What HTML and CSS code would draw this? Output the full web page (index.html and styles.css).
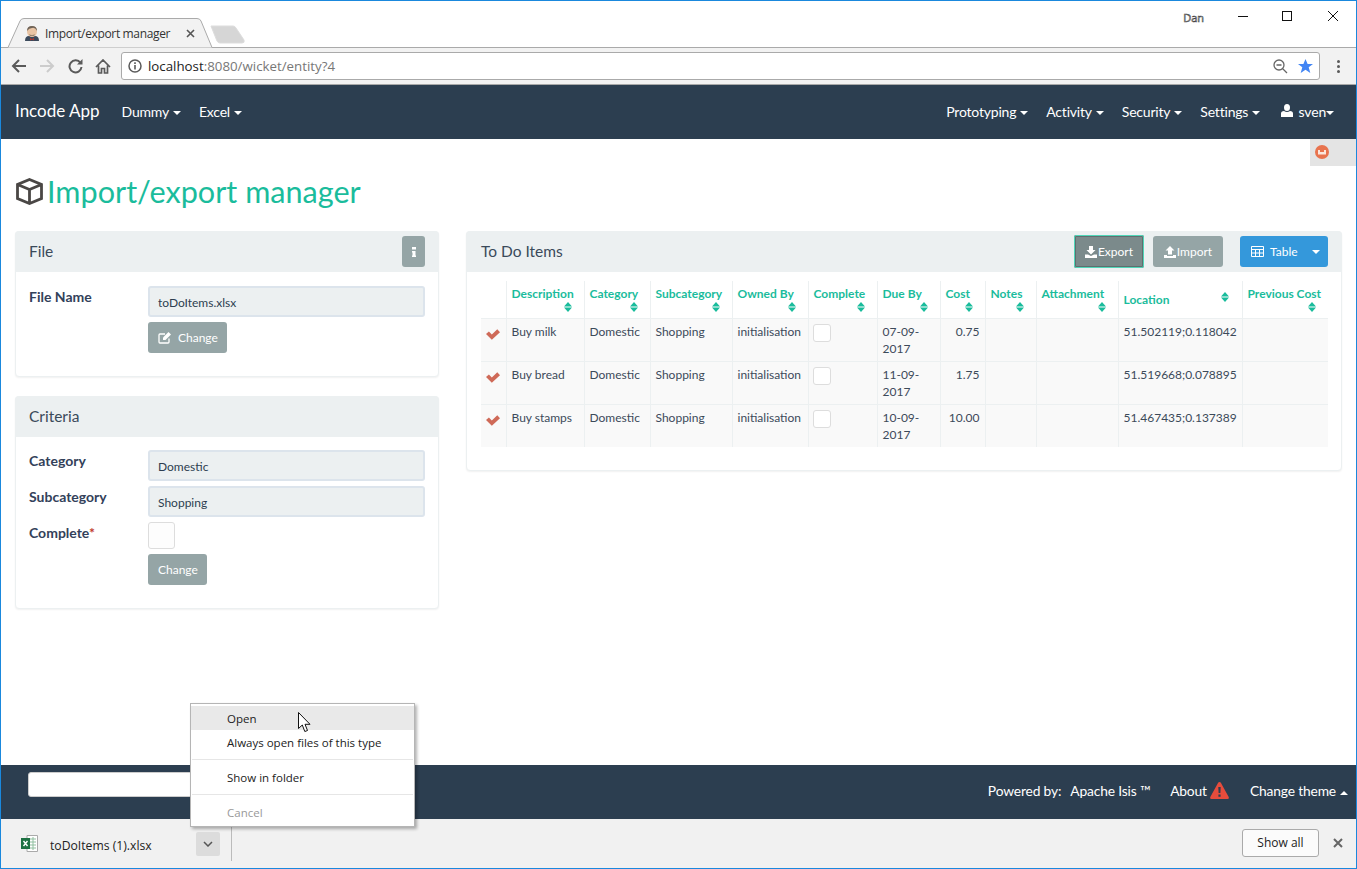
FILE: index.html
```html
<!DOCTYPE html>
<html>

<head>
  <meta charset="utf-8">
  <title>Import/export manager</title>
  <link rel="stylesheet" href="styles.css">
</head>

<body>
  <svg class="sprite">
    <symbol id="sort" viewBox="0 0 8 10"><path d="M4 0 8 4.500H0ZM0 5.500H8L4 10Z" /></symbol>
    <symbol id="check" viewBox="0 0 14.4 11"><path d="M0 5 3 2.300 6 5.600 11.600 0 14.400 3.300 6 11Z" /></symbol>
  </svg>

  <div class="window">
    <!-- browser chrome -->
    <header class="tabstrip">
      <div class="tab">
        <svg class="tab-shape" width="206" height="30" viewBox="0 0 206 30">
          <path d="M0 29.500H1L13 3Q14 .5 17 .5H190Q193 .5 194 3L205 29.500H206" fill="#f2f2f2" stroke="#aaa" />
        </svg>
        <svg class="favicon" width="16" height="16" viewBox="0 0 16 16">
          <path d="M1 16Q1 11 5 11H11Q15 11 15 16Z" fill="#3c4a5c" />
          <ellipse cx="8" cy="6.500" rx="5" ry="5.500" fill="#e9c4a4" />
          <path d="M3 6Q3 1 8 1 13 1 13 6 11 2 8 3 5 3 3 6Z" fill="#6d6256" />
          <path d="M5 9Q8 11 11 9L10 11H6Z" fill="#9a8570" />
          <path d="M6 13 8 14 10 13V15.500L8 14.500 6 15.500Z" fill="#b5352c" />
        </svg>
        <span class="tab-title">Import/export manager</span>
        <svg class="tab-close" width="9" height="9" viewBox="0 0 9 9"><path d="M1 1 8 8M8 1 1 8" stroke="#555" stroke-width="1.600" /></svg>
      </div>
      <svg class="newtab" width="36" height="19" viewBox="0 0 36 19"><path d="M1 1H23Q25 1 26 3L34 15Q35 18 32 18H10Q8 18 7 16Z" fill="#d6d6d6" stroke="#ddd" /></svg>
      <div class="winctl">
        <span class="winuser">Dan</span>
        <svg width="10" height="1" viewBox="0 0 10 1"><path d="M0 .5H10" stroke="#111" /></svg>
        <svg width="10" height="10" viewBox="0 0 10 10"><rect x=".5" y=".5" width="9" height="9" fill="none" stroke="#111" /></svg>
        <svg width="10" height="10" viewBox="0 0 10 10"><path d="M0 0 10 10M10 0 0 10" stroke="#111" /></svg>
      </div>
    </header>

    <div class="toolbar">
      <span class="tool"><svg width="16" height="14" viewBox="0 0 16 14"><path d="M15 7H2M8 1 2 7 8 13" fill="none" stroke="#5a5a5a" stroke-width="2" /></svg></span>
      <span class="tool"><svg width="16" height="14" viewBox="0 0 16 14"><path d="M1 7H14M8 1 14 7 8 13" fill="none" stroke="#ccc" stroke-width="2" /></svg></span>
      <span class="tool"><svg width="15" height="15" viewBox="0 0 15 15"><path d="M12.500 4A6 6 0 1 0 13.500 8" fill="none" stroke="#5a5a5a" stroke-width="2" /><path d="M9 5.500H14.500V0Z" fill="#5a5a5a" /></svg></span>
      <span class="tool"><svg width="16" height="15" viewBox="0 0 16 15"><path d="M1 8 8 1 15 8M3.500 6.500V14H6.500V9.500H9.500V14H12.500V6.500" fill="none" stroke="#5a5a5a" stroke-width="1.700" /></svg></span>
      <div class="omnibox">
        <svg width="14" height="14" viewBox="0 0 14 14"><circle cx="7" cy="7" r="6" fill="none" stroke="#5a5a5a" stroke-width="1.500" /><path d="M7 6V10.500M7 3.300V5" stroke="#5a5a5a" stroke-width="1.600" /></svg>
        <span class="url"><b>localhost</b>:8080/wicket/entity?4</span>
        <svg class="zoomout" width="15" height="15" viewBox="0 0 15 15"><circle cx="6" cy="6" r="5" fill="none" stroke="#666" stroke-width="1.300" /><path d="M3.500 6H8.500M9.500 9.500 14 14" stroke="#666" stroke-width="1.300" /></svg>
        <svg width="15" height="14" viewBox="0 0 15 14"><path d="M7.500 0 9.600 5H15L10.700 8.300 12.300 14 7.500 10.700 2.700 14 4.300 8.300 0 5H5.400Z" fill="#4285f4" /></svg>
      </div>
      <span class="kebab"><i></i><i></i><i></i></span>
    </div>

    <!-- app -->
    <nav class="navbar">
      <a class="brand">Incode App</a>
      <ul class="menu">
        <li>Dummy<span class="caret"></span></li>
        <li>Excel<span class="caret"></span></li>
      </ul>
      <ul class="menu menu-right">
        <li>Prototyping<span class="caret"></span></li>
        <li>Activity<span class="caret"></span></li>
        <li>Security<span class="caret"></span></li>
        <li>Settings<span class="caret"></span></li>
        <li class="user">
          <svg width="12" height="13" viewBox="0 0 12 13"><ellipse cx="6" cy="3.500" rx="3" ry="3.500" /><path d="M0 13V9.500Q0 7 3 7 6 9 9 7 12 7 12 9.500V13Z" /></svg>
          sven<span class="caret caret-tight"></span>
        </li>
      </ul>
    </nav>

    <main class="page">
      <div class="debugbar">
        <svg width="14" height="14" viewBox="0 0 14 14"><circle cx="7" cy="7" r="7" fill="#e8734e" /><path d="M3 5H5V7H9V5H11V9.500H3Z" fill="#fbe6dc" /></svg>
      </div>

      <h1 class="title">
        <svg width="27" height="27" viewBox="0 0 27 27"><path d="M13.500 1.500 25.500 6.500V20.500L13.500 25.500 1.500 20.500V6.500ZM1.500 6.500 13.500 11.500 25.500 6.500M13.500 11.500V25.500" fill="none" stroke="#4a4745" stroke-width="2.800" /></svg>
        Import/export manager
      </h1>

      <div class="columns">
        <div class="col-left">
          <section class="panel">
            <div class="panel-head">
              <span class="panel-title">File</span>
              <span class="btn btn-info">
                <svg width="4" height="10" viewBox="0 0 4 10"><path d="M0 0H4V2.500H0ZM0 4H3.500V8.500H4V10H0V8.500H.5V5.500H0Z" fill="#fff" /></svg>
              </span>
            </div>
            <div class="panel-body">
              <div class="field">
                <label>File Name</label>
                <div class="value">toDoItems.xlsx</div>
              </div>
              <div class="actions">
                <span class="btn btn-change">
                  <svg width="14" height="13" viewBox="0 0 14 13"><path d="M11 7.500V11Q11 12 10 12H2Q1 12 1 11V4Q1 3 2 3H7" fill="none" stroke="#fff" stroke-width="1.300" /><path d="M5 6.500 10.500 1 13 3.500 7.500 9H5Z" fill="#fff" /></svg>
                  Change
                </span>
              </div>
            </div>
          </section>

          <section class="panel">
            <div class="panel-head">
              <span class="panel-title">Criteria</span>
            </div>
            <div class="panel-body panel-body-criteria">
              <div class="field">
                <label>Category</label>
                <div class="value">Domestic</div>
              </div>
              <div class="field">
                <label>Subcategory</label>
                <div class="value">Shopping</div>
              </div>
              <div class="field">
                <label>Complete<em>*</em></label>
                <span class="checkbox checkbox-lg"></span>
              </div>
              <div class="actions">
                <span class="btn btn-change">Change</span>
              </div>
            </div>
          </section>
        </div>

        <section class="panel panel-right">
          <div class="panel-head">
            <span class="panel-title">To Do Items</span>
            <span class="btn btn-tool btn-focus"><svg width="12" height="12" viewBox="0 0 12 12"><path d="M4 0H8V4H10.500L6 8.500 1.500 4H4ZM0 8.500H3L6 10 9 8.500H12V12H0Z" fill="#fff" /></svg>Export</span>
            <span class="btn btn-tool"><svg width="12" height="12" viewBox="0 0 12 12"><path d="M6 0 10.500 4.500H8V8.500H4V4.500H1.500ZM0 9H3V10H9V9H12V12H0Z" fill="#fff" /></svg>Import</span>
            <span class="btn btn-table">
              <svg width="13" height="11" viewBox="0 0 13 11"><path d="M.5.500H12.500V10.500H.5ZM.5 3.500H12.500M.5 7H12.500M4.500 3.500V10.500M8.500 3.500V10.500" fill="none" stroke="#fff" /></svg>
              Table
              <span class="caret caret-table"></span>
            </span>
          </div>
          <div class="panel-body panel-body-table">
            <table class="grid">
              <colgroup>
                <col class="c0"><col class="c1"><col class="c2"><col class="c3"><col class="c4"><col class="c5"><col class="c6"><col class="c7"><col class="c8"><col class="c9"><col class="c10"><col class="c11">
              </colgroup>
              <thead>
                <tr>
                  <th></th>
                  <th>Description<svg class="sort"><use href="#sort" /></svg></th>
                  <th>Category<svg class="sort"><use href="#sort" /></svg></th>
                  <th>Subcategory<svg class="sort"><use href="#sort" /></svg></th>
                  <th>Owned By<svg class="sort"><use href="#sort" /></svg></th>
                  <th>Complete<svg class="sort"><use href="#sort" /></svg></th>
                  <th>Due By<svg class="sort"><use href="#sort" /></svg></th>
                  <th>Cost<svg class="sort"><use href="#sort" /></svg></th>
                  <th>Notes<svg class="sort"><use href="#sort" /></svg></th>
                  <th>Attachment<svg class="sort"><use href="#sort" /></svg></th>
                  <th><div class="th-inline">Location<svg class="sort"><use href="#sort" /></svg></div></th>
                  <th>Previous Cost<svg class="sort"><use href="#sort" /></svg></th>
                </tr>
              </thead>
              <tbody>
                <tr>
                  <td class="tick"><svg><use href="#check" /></svg></td>
                  <td>Buy milk</td><td>Domestic</td><td>Shopping</td><td>initialisation</td>
                  <td><span class="checkbox"></span></td>
                  <td>07-09-2017</td><td class="num">0.75</td><td></td><td></td>
                  <td>51.502119;0.118042</td><td></td>
                </tr>
                <tr>
                  <td class="tick"><svg><use href="#check" /></svg></td>
                  <td>Buy bread</td><td>Domestic</td><td>Shopping</td><td>initialisation</td>
                  <td><span class="checkbox"></span></td>
                  <td>11-09-2017</td><td class="num">1.75</td><td></td><td></td>
                  <td>51.519668;0.078895</td><td></td>
                </tr>
                <tr>
                  <td class="tick"><svg><use href="#check" /></svg></td>
                  <td>Buy stamps</td><td>Domestic</td><td>Shopping</td><td>initialisation</td>
                  <td><span class="checkbox"></span></td>
                  <td>10-09-2017</td><td class="num">10.00</td><td></td><td></td>
                  <td>51.467435;0.137389</td><td></td>
                </tr>
              </tbody>
            </table>
          </div>
        </section>
      </div>
    </main>

    <footer class="footer">
      <div class="footer-input"></div>
      <ul class="menu menu-right menu-foot">
        <li class="powered">Powered by:</li>
        <li>Apache Isis ™</li>
        <li class="about">About
          <svg width="19" height="17" viewBox="0 0 19 17"><path d="M9.500 0Q10.500 0 11 1L18.700 15Q19.300 17 17.500 17H1.500Q-.3 17 .3 15L8 1Q8.500 0 9.500 0Z" fill="#e74c3c" /><path d="M8.300 5H10.700L10.400 11H8.600ZM8.400 12.500H10.600V14.700H8.400Z" fill="#2c3e50" /></svg>
        </li>
        <li>Change theme<span class="caret caret-up"></span></li>
      </ul>
    </footer>

    <!-- downloads shelf -->
    <div class="shelf">
      <svg class="xls" width="17" height="18" viewBox="0 0 17 18">
        <path d="M6 .5H16.500V16.500H6Z" fill="#fff" stroke="#aaa" />
        <path d="M9 4H15M9 7H15M9 10H15M9 13H15M12 2V15" stroke="#8fbf9f" />
        <rect x="0" y="3" width="9" height="11" fill="#1f7244" />
        <path d="M2.500 6 6.500 11M6.500 6 2.500 11" stroke="#fff" stroke-width="1.400" />
      </svg>
      <span class="filename">toDoItems (1).xlsx</span>
      <span class="chevron"><svg width="10" height="6" viewBox="0 0 10 6"><path d="M1 1 5 5 9 1" fill="none" stroke="#555" stroke-width="1.500" /></svg></span>
      <span class="shelf-sep"></span>
      <span class="showall">Show all</span>
      <svg class="shelf-close" width="10" height="10" viewBox="0 0 10 10"><path d="M1 1 9 9M9 1 1 9" stroke="#666" stroke-width="2" /></svg>
    </div>

    <!-- context menu over the shelf -->
    <div class="ctx">
      <div class="ctx-item ctx-hover">Open</div>
      <div class="ctx-item">Always open files of this type</div>
      <div class="ctx-sep"></div>
      <div class="ctx-item">Show in folder</div>
      <div class="ctx-sep"></div>
      <div class="ctx-item ctx-off">Cancel</div>
    </div>
    <svg class="cursor" width="13" height="21" viewBox="0 0 13 21"><path d="M.5.500V16.500L4.300 13 6.800 19.500 9.500 18.500 7 12.300H12Z" fill="#fff" stroke="#111" /></svg>
  </div>
</body>

</html>
```

FILE: styles.css
```css
* {
  box-sizing: border-box;
}

body {
  margin: 0;
  background: #fff;
  font-family: "Lato", "Open Sans", sans-serif;
  font-size: 12px;
  color: #2c3e50;
}

ul {
  list-style: none;
  margin: 0;
  padding: 0;
}

.sprite {
  display: none;
}

.window {
  position: relative;
  display: flex;
  flex-direction: column;
  width: 1357px;
  height: 869px;
  border: 1px solid #1a88dd;
  overflow: hidden;
}

/* ---- browser chrome ---- */

.tabstrip {
  display: flex;
  flex: none;
  align-items: flex-end;
  height: 47px;
  background: #fff;
  border-bottom: 1px solid #aaa;
  padding-left: 6px;
  font-family: "Open Sans", sans-serif;
}

.tab {
  position: relative;
  display: flex;
  align-items: center;
  width: 206px;
  height: 30px;
  margin-bottom: -1px;
  padding-left: 17px;
}

.tab-shape {
  position: absolute;
  left: 0;
  top: 0;
}

.favicon,
.tab-title,
.tab-close {
  position: relative;
}

.tab-title {
  margin-left: 5px;
  width: 136px;
  font-size: 12px;
  letter-spacing: -.35px;
  color: #333;
  white-space: nowrap;
}

.tab-close {
  margin-left: 5px;
}

.newtab {
  margin: 0 0 3px -3px;
}

.winctl {
  display: flex;
  align-items: center;
  align-self: flex-start;
  margin-left: auto;
  height: 18px;
  margin-top: 6px;
  padding-right: 18px;
}

.winctl svg {
  margin-left: 35px;
}

.winctl svg:nth-of-type(2) {
  margin-left: 34px;
}

.winctl svg:nth-of-type(3) {
  margin-left: 36px;
}

.winuser {
  font-size: 11px;
  color: #fff;
  -webkit-text-stroke: .6px #444;
  margin-right: -1px;
  margin-top: 2px;
}

.toolbar {
  display: flex;
  flex: none;
  align-items: center;
  height: 37px;
  padding-left: 4px;
  background: #f2f2f2;
  border-bottom: 1px solid #a8a8a8;
}

.tool {
  display: flex;
  align-items: center;
  justify-content: center;
  width: 28px;
}

.omnibox {
  display: flex;
  align-items: center;
  gap: 6px;
  width: 1199px;
  height: 28px;
  margin-left: 4px;
  padding: 0 6px;
  background: #fff;
  border: 1px solid #aaa;
  border-radius: 3px;
  font-family: "Open Sans", sans-serif;
}

.url {
  font-size: 13.300px;
  color: #777;
  white-space: nowrap;
}

.url b {
  font-weight: normal;
  color: #222;
}

.zoomout {
  margin-left: auto;
  margin-right: 4px;
}

.kebab {
  display: flex;
  flex-direction: column;
  align-items: center;
  gap: 2px;
  width: 36px;
}

.kebab i {
  width: 3px;
  height: 3px;
  background: #5a5a5a;
  border-radius: 50%;
}

/* ---- navbar ---- */

.navbar {
  display: flex;
  flex: none;
  align-items: center;
  height: 54px;
  padding: 0 22px 0 14px;
  background: #2c3e50;
  color: #fff;
}

.brand {
  margin-right: 22px;
  margin-top: -4px;
  font-size: 17px;
}

.menu {
  display: flex;
  gap: 18px;
  margin-top: -2px;
  font-size: 14px;
  letter-spacing: -.2px;
}

.menu-right {
  margin-left: auto;
}

.caret {
  display: inline-block;
  margin-left: 4px;
  vertical-align: middle;
  border-top: 4px solid #fff;
  border-left: 4px solid transparent;
  border-right: 4px solid transparent;
}

.caret-tight {
  margin-left: 0;
}

.caret-up {
  border-top: 0;
  border-bottom: 4px solid #fff;
}

.user svg {
  fill: #fff;
  margin-right: 2px;
  margin-left: 3px;
}

/* ---- page ---- */

.page {
  position: relative;
  flex: 1;
  min-height: 0;
  padding: 0 14px;
}

.debugbar {
  position: absolute;
  top: 0;
  right: 0;
  width: 46px;
  height: 27px;
  padding: 6px 0 0 5px;
  background: #e4e4e4;
}

.debugbar svg {
  display: block;
}

.title {
  display: flex;
  align-items: center;
  gap: 4px;
  height: 92px;
  margin: 0;
  padding: 12px 0 0 1px;
  font-size: 30.600px;
  font-weight: normal;
  color: #1abc9c;
}

.columns {
  display: flex;
  align-items: flex-start;
  gap: 27px;
}

.col-left {
  display: flex;
  flex-direction: column;
  gap: 19px;
  width: 424px;
}

.panel {
  background: #fff;
  border: 1px solid #ecf0f1;
  border-radius: 4px;
  box-shadow: 0 1px 2px rgba(0, 0, 0, .06);
}

.panel-right {
  width: 876px;
  height: 240px;
}

.panel-head {
  display: flex;
  align-items: center;
  height: 41px;
  margin: -1px -1px 0;
  padding: 0 14px;
  background: #ecf0f1;
  border-radius: 4px 4px 0 0;
}

.panel-title {
  margin-right: auto;
  margin-top: -2px;
  font-size: 15.500px;
  color: #3a4a5a;
}

.panel-right .panel-title {
  margin-left: 1px;
}

.panel-body {
  padding: 14px 13px 23px;
}

.panel-body-criteria {
  padding-top: 13px;
}

.panel-body-table {
  padding: 9px 13px 0 14px;
}

.field {
  display: flex;
  align-items: flex-start;
  margin-bottom: 5px;
}

.field label {
  width: 119px;
  padding-top: 2px;
  font-size: 14px;
  font-weight: bold;
  line-height: 18px;
  color: #33415a;
}

.field em {
  font-style: normal;
  color: #c0392b;
}

.value {
  width: 277px;
  height: 31px;
  padding: 0 8px;
  line-height: 29px;
  font-size: 12px;
  background: #ecf0f1;
  border: 2px solid #dce4ec;
  border-radius: 3px;
}

.checkbox {
  display: block;
  width: 18px;
  height: 18px;
  background: #fff;
  border: 1px solid #ddd;
  border-radius: 3px;
}

.grid .checkbox {
  margin: 1px 0 0 -1px;
}

.checkbox-lg {
  width: 27px;
  height: 27px;
  background: #fdfdfd;
}

.actions {
  padding-left: 119px;
}

.btn {
  display: inline-flex;
  align-items: center;
  height: 31px;
  color: #fff;
  background: #95a5a6;
  border-radius: 3px;
  font-size: 12px;
}

.btn-info {
  justify-content: center;
  width: 23px;
}

.btn-change {
  gap: 6px;
  padding: 0 9px 0 10px;
}

.btn-tool {
  gap: 1px;
  width: 70px;
  justify-content: center;
  margin-right: 9px;
}

.btn-focus {
  height: 33px;
  background: #7b8a8b;
  border: 2px solid #5f6e6f;
  outline: 1px solid #4fd6b8;
  outline-offset: -1px;
  border-radius: 2px;
}

.btn-table {
  gap: 6px;
  width: 88px;
  margin-left: 8px;
  padding: 0 8px 0 11px;
  background: #3498db;
}

.caret-table {
  margin-left: auto;
}

/* ---- table ---- */

.grid {
  width: 847px;
  table-layout: fixed;
  border-collapse: collapse;
  line-height: 17px;
}

.c0 { width: 25px; }
.c1 { width: 78px; }
.c2 { width: 66px; }
.c3 { width: 82px; }
.c4 { width: 76px; }
.c5 { width: 69px; }
.c6 { width: 63px; }
.c7 { width: 45px; }
.c8 { width: 51px; }
.c9 { width: 82px; }
.c10 { width: 124px; }
.c11 { width: 86px; }

.grid th,
.grid td {
  border-left: 1px solid #ecf0f1;
  border-bottom: 1px solid #ecf0f1;
  padding: 4px 5px 4px;
  vertical-align: top;
  text-align: left;
}

.grid th:first-child,
.grid td:first-child {
  border-left: 0;
}

.grid th {
  height: 37px;
  padding: 5px 5px 0;
  color: #1abc9c;
  line-height: 15px;
  white-space: nowrap;
  vertical-align: top;
}

.grid td {
  height: 43px;
  background: #f9f9f9;
  color: #3c4a5a;
}

.grid td.num {
  text-align: right;
}

.grid tbody tr:last-child td {
  border-bottom: 0;
}

.sort {
  display: block;
  width: 8px;
  height: 10px;
  margin: 1px 7px 0 auto;
  fill: #1abc9c;
}

.th-inline {
  display: flex;
  align-items: center;
  justify-content: space-between;
  height: 27px;
}

.th-inline .sort {
  margin: -6px 8px 0 0;
}

.grid .tick {
  padding: 10px 0 0 5px;
}

.tick svg {
  display: block;
  width: 14px;
  height: 11px;
  fill: #cf6a58;
}

/* ---- footer ---- */

.footer {
  display: flex;
  flex: none;
  align-items: center;
  height: 54px;
  padding: 0 8px 0 27px;
  background: #2c3e50;
  color: #fff;
}

.footer-input {
  align-self: flex-start;
  width: 200px;
  height: 25px;
  margin-top: 7px;
  background: #fff;
  border: 1px solid #ccc;
  border-radius: 3px;
}

.menu-foot {
  align-items: center;
  margin-top: -3px;
  font-size: 13.800px;
  letter-spacing: -.15px;
  gap: 18px;
}

.powered {
  margin-right: -9px;
}

.about {
  display: flex;
  align-items: center;
  gap: 3px;
  margin: 0 3px 0 2px;
}

/* ---- shelf ---- */

.shelf {
  display: flex;
  flex: none;
  align-items: center;
  height: 49px;
  padding: 0 13px 0 20px;
  background: #f1f1f1;
  font-family: "Open Sans", sans-serif;
}

.filename {
  width: 146px;
  margin: 3px 0 0 12px;
  font-size: 12.200px;
  color: #222;
}

.chevron {
  display: flex;
  align-items: center;
  justify-content: center;
  width: 24px;
  height: 24px;
  background: #dcdcdc;
  border-radius: 2px;
}

.shelf-sep {
  width: 1px;
  height: 35px;
  margin-left: 11px;
  background: #bbb;
}

.showall {
  display: flex;
  align-items: center;
  justify-content: center;
  width: 77px;
  height: 28px;
  margin: -2px 0 0 auto;
  background: #fbfbfb;
  border: 1px solid #aaa;
  border-radius: 3px;
  font-size: 12px;
  color: #222;
}

.shelf-close {
  margin: -2px 0 0 14px;
}

/* ---- context menu ---- */

.ctx {
  position: absolute;
  left: 189px;
  top: 702px;
  width: 225px;
  height: 124px;
  padding-top: 2px;
  background: #fff;
  border: 1px solid #b5b5b5;
  box-shadow: 2px 2px 3px rgba(0, 0, 0, .3);
  font-family: "Open Sans", sans-serif;
  font-size: 11.500px;
  color: #222;
}

.ctx-item {
  height: 24px;
  padding-left: 36px;
  line-height: 25px;
}

.ctx-hover {
  background: #e9e9e9;
}

.ctx-off {
  color: #999;
}

.ctx-sep {
  height: 1px;
  margin: 5px 1px;
  background: #e6e6e6;
}

.cursor {
  position: absolute;
  left: 297px;
  top: 711px;
}
```
